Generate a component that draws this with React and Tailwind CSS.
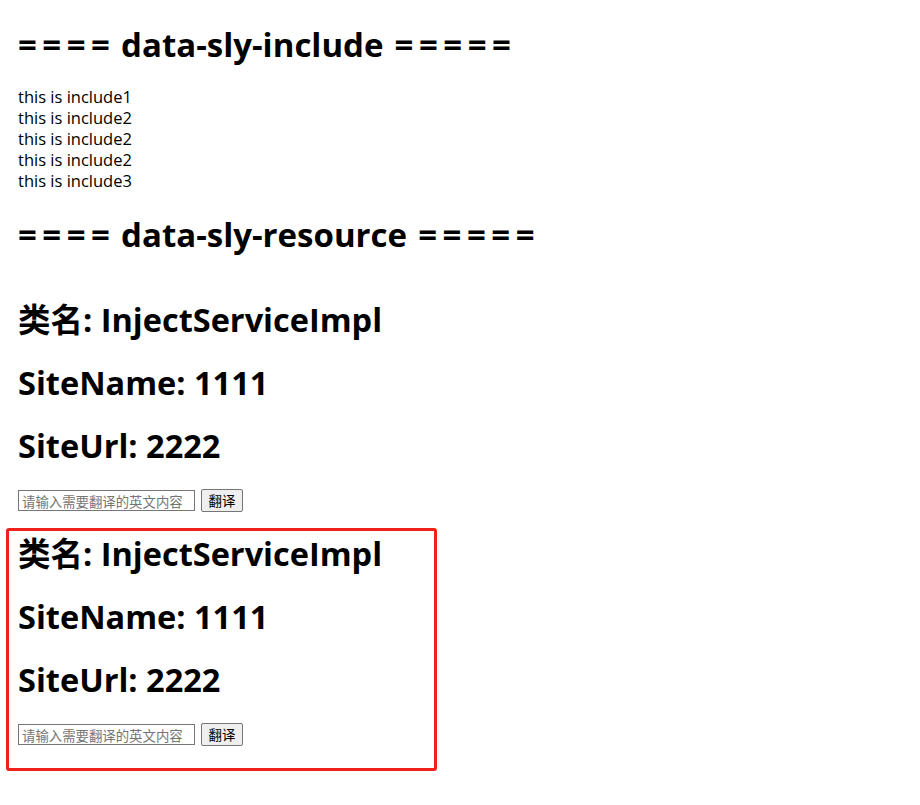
import React from 'react';

const font = "font-['Open_Sans','Noto_Sans_CJK_SC',sans-serif]";

function Title({ name, className = '' }) {
  return (
    <h2 className={`text-[33px] leading-[40px] font-bold ${className}`}>
      <span className="tracking-[5.5px]">===</span>= <span className="mx-[2.5px]">{name}</span>{' '}
      <span className="tracking-[5.5px]">=====</span>
    </h2>
  );
}

function ServiceInfo() {
  return (
    <>
      <h1 className="text-[32.5px] leading-[42px] font-bold">类名: InjectServiceImpl</h1>
      <h1 className="mt-[21px] text-[32.5px] leading-[42px] font-bold">SiteName: 1111</h1>
      <h1 className="mt-[21px] text-[32.5px] leading-[42px] font-bold">SiteUrl: 2222</h1>
      <div className="mt-[22px] flex items-center gap-[6px]">
        <input
          type="text"
          placeholder="请输入需要翻译的英文内容"
          className="w-[177px] h-[21px] border border-[#767676] px-[3px] text-[13.4px] placeholder:text-[#757575] font-['Noto_Sans_CJK_SC',sans-serif]"
        />
        <button className="h-[23px] w-[42px] border border-[#767676] rounded-[2px] bg-[#efefef] text-[13.4px] text-black font-['Noto_Sans_CJK_SC',sans-serif]">
          翻译
        </button>
      </div>
    </>
  );
}

export default function App() {
  return (
    <div className={`${font} min-h-[805px] bg-white text-black pl-[18px] pt-[25px]`}>
      <Title name="data-sly-include" />

      <div className="mt-[21px] text-[16.5px] leading-[21px]">
        <div>this is include1</div>
        <div>this is include2</div>
        <div>this is include2</div>
        <div>this is include2</div>
        <div>this is include3</div>
      </div>

      <Title name="data-sly-resource" className="mt-[24px]" />

      <div className="mt-[44px]">
        <ServiceInfo />
      </div>

      <div className="mt-[16px] -ml-[12px] w-[431px] h-[243px] border-[3px] border-[#f0201a] rounded-[3px] pl-[9px] pt-[2px]">
        <ServiceInfo />
      </div>
    </div>
  );
}
